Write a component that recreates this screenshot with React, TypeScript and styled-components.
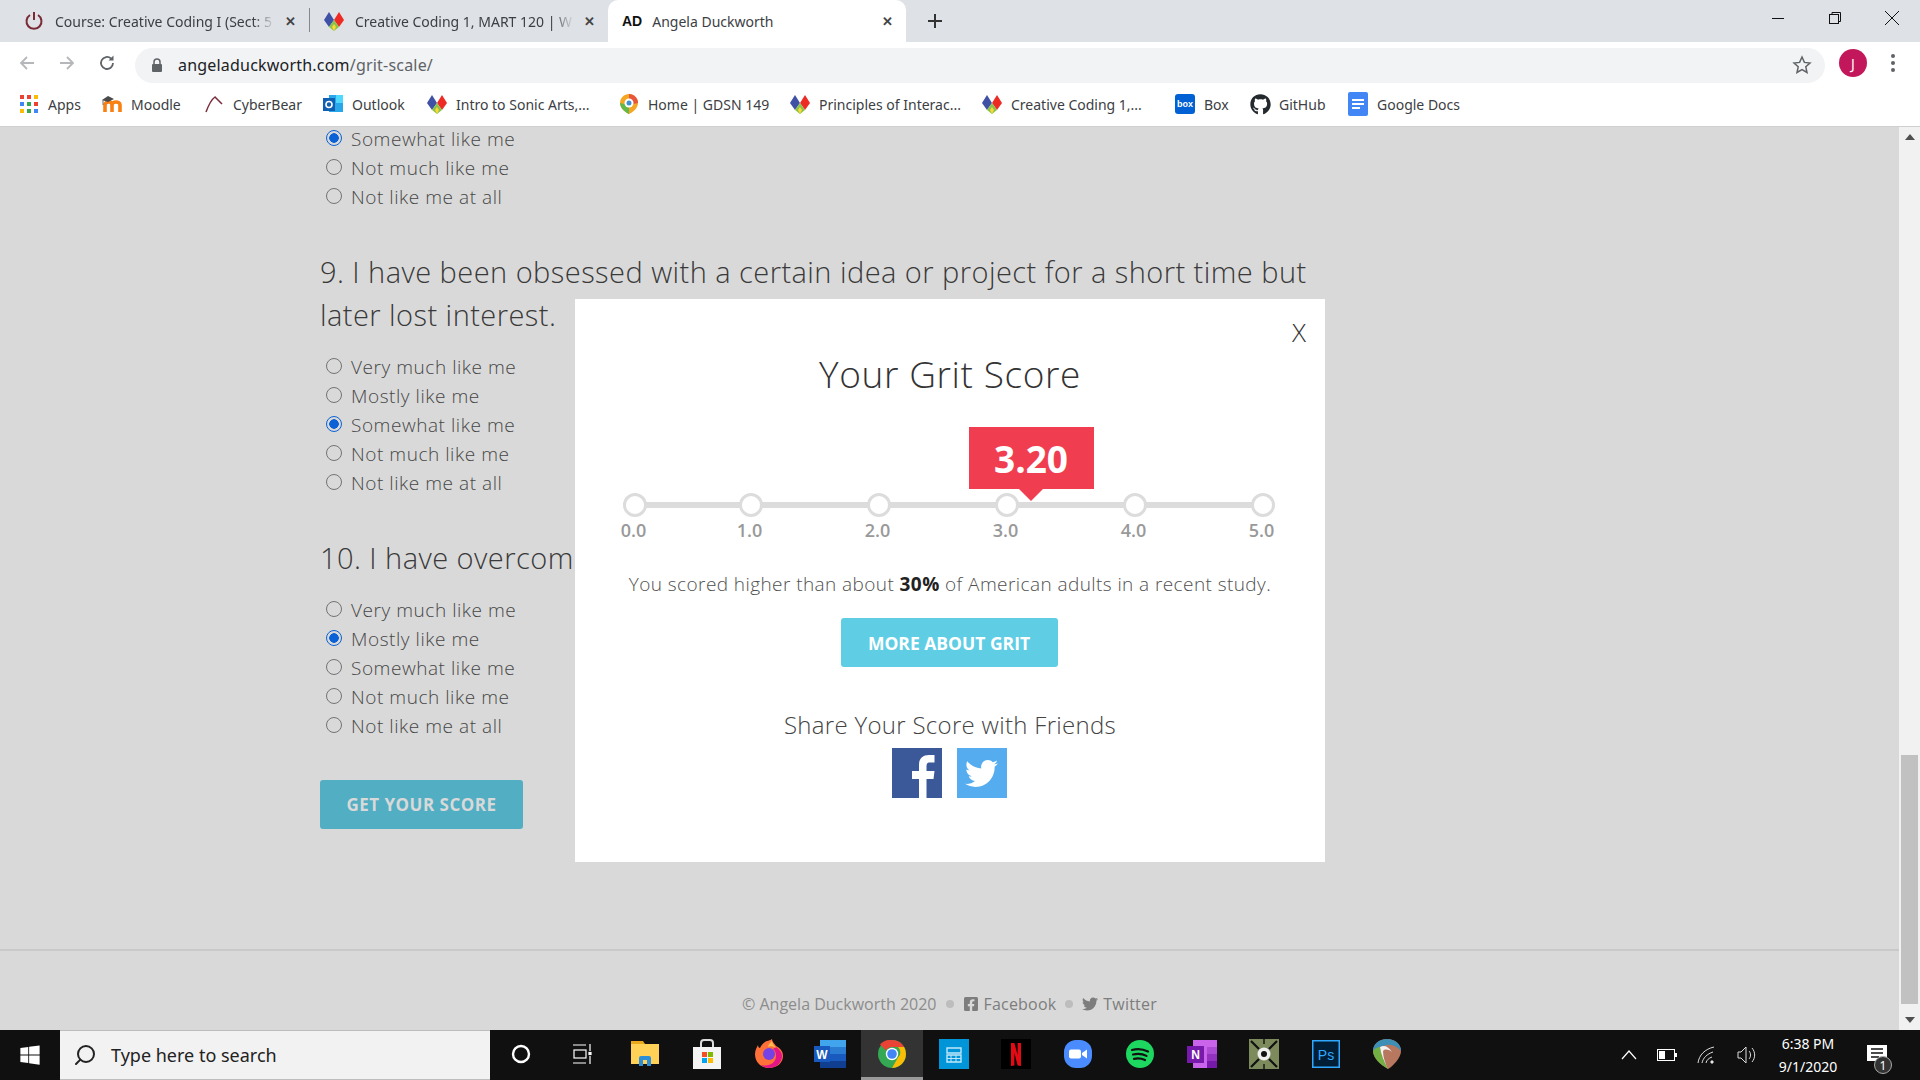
import React from 'react'
import styled, { createGlobalStyle } from 'styled-components'
import { FaFacebookSquare, FaTwitter, FaWindows, FaGithub } from 'react-icons/fa'
import { FiSearch } from 'react-icons/fi'

const PAGE_FONT = `'Open Sans', 'Noto Sans', sans-serif`
const UI_FONT = `'Noto Sans', 'Open Sans', sans-serif`

const OPTIONS = [
  'Very much like me',
  'Mostly like me',
  'Somewhat like me',
  'Not much like me',
  'Not like me at all',
]

const GlobalStyle = createGlobalStyle`
  html, body {
    margin: 0;
    padding: 0;
    height: 100%;
    overflow: hidden;
  }
  * {
    box-sizing: border-box;
  }
`

const TriColor = () => (
  <svg width="22" height="22" viewBox="0 0 22 22">
    <polygon points="6,2 11,10 6,17 1,10" fill="#3f51a5" />
    <polygon points="16,2 21,10 16,17 11,10" fill="#ee2a24" />
    <polygon points="11,10 16,17 11,21 6,17" fill="#8bc34a" />
    <polygon points="11,14 13,17 11,21 9,17" fill="#fdd835" />
  </svg>
)

const Bookmark = ({ icon, label, width }: { icon: React.ReactNode; label: string; width: number }) => (
  <BookmarkItem $width={width}>
    <BookmarkIcon>{icon}</BookmarkIcon>
    <span>{label}</span>
  </BookmarkItem>
)

const AppsIcon = () => (
  <svg width="18" height="18" viewBox="0 0 18 18">
    {[0, 7, 14].map((y, r) =>
      [0, 7, 14].map((x, c) => (
        <rect
          key={`${r}${c}`}
          x={x}
          y={y}
          width="4"
          height="4"
          fill={[['#ea4335', '#ea4335', '#fbbc05'], ['#4285f4', '#34a853', '#ea4335'], ['#fbbc05', '#34a853', '#4285f4']][r][c]}
        />
      )),
    )}
  </svg>
)

const MoodleIcon = () => (
  <svg width="20" height="18" viewBox="0 0 20 18">
    <path d="M3 17V10c0-2 2-3 4-3s3 1 3 3v7M10 10c0-2 2-3 4-3s4 1 4 3v7" fill="none" stroke="#f98012" strokeWidth="3.600" />
    <path d="M0 5l6-4 6 3-6 3z" fill="#4a4a4a" />
    <path d="M1 5v5" stroke="#4a4a4a" strokeWidth="0.800" />
  </svg>
)

const CyberBearIcon = () => (
  <svg width="20" height="18" viewBox="0 0 20 18">
    <path d="M2 17C5 9 8 4 11 2c2 2 5 5 7 7" fill="none" stroke="#7b2d3d" strokeWidth="1.500" />
  </svg>
)

const OutlookIcon = () => (
  <svg width="20" height="22" viewBox="0 0 20 22">
    <rect x="6" y="2" width="14" height="17" fill="#28a8ea" />
    <rect x="13" y="2" width="7" height="8" fill="#50d9ff" />
    <rect x="0" y="5" width="12" height="13" fill="#0f5fb3" />
    <circle cx="6" cy="11.500" r="3" fill="none" stroke="#fff" strokeWidth="1.600" />
  </svg>
)

const GdsnIcon = () => (
  <svg width="20" height="22" viewBox="0 0 20 22">
    <path d="M10 1c5 0 9 4 9 9 0 5-5 9-9 11-4-2-9-6-9-11 0-5 4-9 9-9z" fill="#f5a623" />
    <path d="M10 1c5 0 9 4 9 9l-9 2z" fill="#e8563a" />
    <path d="M1 10c0 5 5 9 9 11V12z" fill="#64b84a" />
    <circle cx="10" cy="10" r="4.500" fill="#fff" />
    <circle cx="10" cy="10" r="2.500" fill="#3f8fd2" />
  </svg>
)

const BoxIcon = () => <BoxBadge>box</BoxBadge>

const DocsIcon = () => (
  <svg width="20" height="24" viewBox="0 0 20 24">
    <rect width="20" height="24" rx="2" fill="#4285f4" />
    <rect x="4" y="7" width="12" height="2" fill="#fff" />
    <rect x="4" y="11" width="12" height="2" fill="#fff" />
    <rect x="4" y="15" width="8" height="2" fill="#fff" />
  </svg>
)

const ChromeIcon = () => (
  <svg width="28" height="28" viewBox="0 0 28 28">
    <circle cx="14" cy="14" r="14" fill="#34a853" />
    <path d="M14 0a14 14 0 0 1 12.100 7H14a7 7 0 0 0-6.100 3.500L2 4.500A14 14 0 0 1 14 0z" fill="#ea4335" />
    <path d="M26.100 7A14 14 0 0 1 14 28l6-10.500A7 7 0 0 0 20 7z" fill="#fbbc05" />
    <circle cx="14" cy="14" r="6.200" fill="#fff" />
    <circle cx="14" cy="14" r="4.800" fill="#4285f4" />
  </svg>
)

const FacebookF = () => (
  <svg width="50" height="50" viewBox="0 0 50 50">
    <path d="M27 50V31h-7v-8h7v-6c0-7 4-10 10-10h5.500v7.500H38c-2.500 0-3.500 1-3.500 3.500v5h8l-1 8h-7v19z" fill="#fff" />
  </svg>
)

const Tray = {
  Cortana: () => (
    <svg width="20" height="20" viewBox="0 0 20 20">
      <circle cx="10" cy="10" r="8" fill="none" stroke="#fff" strokeWidth="2.400" />
    </svg>
  ),
  TaskView: () => (
    <svg width="20" height="20" viewBox="0 0 20 20" fill="none" stroke="#fff" strokeWidth="1.200">
      <path d="M0 1h13M0 19h13M17 0v7M17 12v8" />
      <rect x="1" y="6" width="12" height="8" />
      <rect x="16" y="8.500" width="2" height="2" fill="#fff" />
    </svg>
  ),
  Explorer: () => (
    <svg width="30" height="26" viewBox="0 0 30 26">
      <path d="M1 0h12l2 3h14v20H1z" fill="#e9a91f" />
      <rect x="1" y="3" width="28" height="20" fill="#ffd257" />
      <path d="M9 25v-8a2 2 0 0 1 2-2h8a2 2 0 0 1 2 2v8h-4v-6h-4v6z" fill="#2a8fd8" />
    </svg>
  ),
  Store: () => (
    <svg width="30" height="30" viewBox="0 0 30 30">
      <path d="M9 8V4a3 3 0 0 1 3-3h6a3 3 0 0 1 3 3v4" fill="none" stroke="#ddd" strokeWidth="2" />
      <rect x="1" y="8" width="28" height="22" fill="#f4f4f4" />
      <rect x="10" y="13" width="5" height="5" fill="#f25022" />
      <rect x="16" y="13" width="5" height="5" fill="#7fba00" />
      <rect x="10" y="19" width="5" height="5" fill="#00a4ef" />
      <rect x="16" y="19" width="5" height="5" fill="#ffb900" />
    </svg>
  ),
  Firefox: () => (
    <svg width="30" height="30" viewBox="0 0 30 30">
      <path d="M15 29C7 29 1 23 1 15c0-4 2-7 3-9 0 2 1 3 2 3 1-3 4-6 7-7 4-1 5-2 5-2 0 3 3 5 4 7 4 2 7 5 7 10 0 7-6 12-14 12z" fill="#ff7139" />
      <path d="M22 8c4 3 6 6 6 9 0 7-6 12-13 12-3 0-6-1-8-3 8 2 15-2 15-9 0-3-1-6-3-7z" fill="#e31587" />
      <circle cx="15" cy="15" r="6" fill="#7542e5" />
      <path d="M18 2c0 3 3 5 4 7-3-2-6-2-8-1 0-2 2-4 4-6z" fill="#ffbd4f" />
    </svg>
  ),
  Word: () => (
    <svg width="32" height="28" viewBox="0 0 32 28">
      <rect x="6" y="0" width="26" height="28" fill="#2b7cd3" />
      <rect x="6" y="0" width="26" height="7" fill="#41a5ee" />
      <rect x="6" y="14" width="26" height="7" fill="#185abd" />
      <rect x="6" y="21" width="26" height="7" fill="#103f91" />
      <rect x="0" y="6" width="16" height="16" fill="#185abd" />
      <text x="8" y="18.500" textAnchor="middle" fill="#fff" fontSize="12" fontFamily="'Liberation Sans', sans-serif" fontWeight="700">W</text>
    </svg>
  ),
  Mail: () => (
    <svg width="30" height="30" viewBox="0 0 30 30">
      <rect width="30" height="30" fill="#0095d9" />
      <path d="M8 9h14v5H8zM8 16h14v7H8z" fill="none" stroke="#bfe7f7" strokeWidth="1.400" />
      <path d="M12 16v7M17 16v7M8 19.500h14" stroke="#bfe7f7" strokeWidth="1" />
    </svg>
  ),
  Netflix: () => (
    <svg width="30" height="30" viewBox="0 0 30 30">
      <rect width="30" height="30" fill="#000" />
      <path d="M10 4h3.400l3.200 12V4H20v23l-3.400-.6L13.400 14v12.600L10 27z" fill="#e50914" />
    </svg>
  ),
  Zoom: () => (
    <svg width="28" height="28" viewBox="0 0 28 28">
      <rect width="28" height="28" rx="12" fill="#4a8cff" />
      <rect x="5" y="9.500" width="12" height="9" rx="2" fill="#fff" />
      <path d="M18 13l5-3.500v9L18 15z" fill="#fff" />
    </svg>
  ),
  Spotify: () => (
    <svg width="28" height="28" viewBox="0 0 28 28">
      <circle cx="14" cy="14" r="14" fill="#1ed760" />
      <path d="M6 10c5-1.500 11-1 16 1.500M7 14.500c4.500-1 9.500-.7 13.500 1.400M8 18.800c4-.8 7.500-.5 11 1.200" fill="none" stroke="#111" strokeWidth="2.200" strokeLinecap="round" />
    </svg>
  ),
  OneNote: () => (
    <svg width="30" height="28" viewBox="0 0 30 28">
      <rect x="6" y="0" width="24" height="28" fill="#ca64ea" />
      <rect x="20" y="7" width="10" height="7" fill="#ae4bd5" />
      <rect x="20" y="14" width="10" height="7" fill="#9332bf" />
      <rect x="20" y="21" width="10" height="7" fill="#7719aa" />
      <rect x="0" y="6" width="17" height="17" fill="#7719aa" />
      <text x="8.500" y="19" textAnchor="middle" fill="#fff" fontSize="12" fontFamily="'Liberation Sans', sans-serif" fontWeight="700">N</text>
    </svg>
  ),
  Obs: () => (
    <svg width="30" height="30" viewBox="0 0 30 30">
      <rect width="30" height="30" fill="#7d8a5c" />
      <path d="M2 2l8 8M28 2l-8 8M2 28l8-8M28 28l-8-8" stroke="#111" strokeWidth="2.200" />
      <path d="M15 0v5M15 25v5" stroke="#111" strokeWidth="1.400" />
      <circle cx="15" cy="15" r="6.500" fill="#eee" />
      <circle cx="15" cy="15" r="3" fill="#111" />
    </svg>
  ),
  Photoshop: () => (
    <svg width="28" height="28" viewBox="0 0 28 28">
      <rect x="0.750" y="0.750" width="26.500" height="26.500" fill="#001e36" stroke="#31a8ff" strokeWidth="1.500" />
      <text x="14" y="19.500" textAnchor="middle" fill="#31a8ff" fontSize="14" fontFamily="'Liberation Sans', sans-serif">Ps</text>
    </svg>
  ),
  Reaper: () => (
    <svg width="28" height="30" viewBox="0 0 28 30">
      <path d="M14 0c8 0 14 5 14 12 0 7-8 15-13 18C8 26 0 19 0 12 0 5 6 0 14 0z" fill="#b8775f" />
      <path d="M14 0c8 0 14 5 14 12-4-5-10-7-14-6-5 1-10 3-14 6C0 5 6 0 14 0z" fill="#3e8fb5" />
      <path d="M0 12c2-3 5-4 7-4 1 7 4 15 8 22C8 26 0 19 0 12z" fill="#72b043" />
      <path d="M7 8c4-2 8-1 12 5-4-3-7-3-9-1 0 6 2 12 5 18-4-7-7-15-8-22z" fill="#f2f2f2" />
    </svg>
  ),
}

const TASK_ICONS = [
  { key: 'cortana', node: <Tray.Cortana /> },
  { key: 'task', node: <Tray.TaskView /> },
  { key: 'explorer', node: <Tray.Explorer /> },
  { key: 'store', node: <Tray.Store /> },
  { key: 'firefox', node: <Tray.Firefox /> },
  { key: 'word', node: <Tray.Word /> },
  { key: 'chrome', node: <ChromeIcon />, active: true },
  { key: 'mail', node: <Tray.Mail /> },
  { key: 'netflix', node: <Tray.Netflix /> },
  { key: 'zoom', node: <Tray.Zoom /> },
  { key: 'spotify', node: <Tray.Spotify /> },
  { key: 'onenote', node: <Tray.OneNote /> },
  { key: 'obs', node: <Tray.Obs /> },
  { key: 'ps', node: <Tray.Photoshop /> },
  { key: 'reaper', node: <Tray.Reaper /> },
]

const SCALE = [
  { label: '0.0', width: 116 },
  { label: '1.0', width: 128 },
  { label: '2.0', width: 128 },
  { label: '3.0', width: 128 },
  { label: '4.0', width: 128 },
  { label: '5.0', width: 0 },
]

const Question = ({ checked }: { checked: number }) => (
  <Options>
    {OPTIONS.map((text, i) => (
      <Option key={text}>
        <Radio type="radio" defaultChecked={i === checked} name={`q${checked}${text}`} />
        {text}
      </Option>
    ))}
  </Options>
)

export default function App() {
  return (
    <Screen>
      <GlobalStyle />
      <TabStrip>
        <Tab $width={299}>
          <TabIcon>
            <svg width="20" height="20" viewBox="0 0 20 20" fill="none" stroke="#7a2a35" strokeWidth="2">
              <path d="M10 1v8" />
              <path d="M6 4a7.500 7.500 0 1 0 8 0" />
            </svg>
          </TabIcon>
          <FadedLabel>Course: Creative Coding I (Sect: 5</FadedLabel>
          <TabClose>✕</TabClose>
        </Tab>
        <TabSeparator />
        <Tab $width={298}>
          <TabIcon><TriColor /></TabIcon>
          <FadedLabel>Creative Coding 1, MART 120 | W</FadedLabel>
          <TabClose>✕</TabClose>
        </Tab>
        <ActiveTab>
          <AdMark>AD</AdMark>
          <TabLabel>Angela Duckworth</TabLabel>
          <TabClose>✕</TabClose>
        </ActiveTab>
        <NewTab>
          <svg width="16" height="16" viewBox="0 0 16 16" stroke="#333" strokeWidth="2">
            <path d="M8 1v14M1 8h14" />
          </svg>
        </NewTab>
        <WindowControls>
          <WindowButton>
            <svg width="12" height="12" viewBox="0 0 12 12" stroke="#111"><path d="M0 6.500h12" /></svg>
          </WindowButton>
          <WindowButton>
            <svg width="14" height="14" viewBox="0 0 14 14" fill="none" stroke="#111">
              <rect x="1.500" y="3.500" width="9" height="9" />
              <path d="M4 3.500V1.500h8.500v9h-2" />
            </svg>
          </WindowButton>
          <WindowButton>
            <svg width="14" height="14" viewBox="0 0 14 14" stroke="#111"><path d="M0 0l14 14M14 0L0 14" /></svg>
          </WindowButton>
        </WindowControls>
      </TabStrip>

      <Toolbar>
        <NavIcons>
          <svg width="18" height="18" viewBox="0 0 18 18" fill="none" stroke="#b5b7ba" strokeWidth="1.800">
            <path d="M16 9H3M9 3L3 9l6 6" />
          </svg>
          <svg width="18" height="18" viewBox="0 0 18 18" fill="none" stroke="#b5b7ba" strokeWidth="1.800">
            <path d="M2 9h13M9 3l6 6-6 6" />
          </svg>
          <svg width="18" height="18" viewBox="0 0 18 18" fill="none" stroke="#5f6368" strokeWidth="1.800">
            <path d="M15 9a6 6 0 1 1-2-4.500" />
            <path d="M15.500 1.500v5h-5z" fill="#5f6368" stroke="none" />
          </svg>
        </NavIcons>
        <Omnibox>
          <svg width="12" height="15" viewBox="0 0 12 15">
            <path d="M3 6V4a3 3 0 0 1 6 0v2" fill="none" stroke="#5f6368" strokeWidth="1.500" />
            <rect x="1" y="6" width="10" height="8" rx="1" fill="#5f6368" />
          </svg>
          <UrlText>
            angeladuckworth.com<UrlPath>/grit-scale/</UrlPath>
          </UrlText>
          <svg width="20" height="20" viewBox="0 0 20 20" fill="none" stroke="#5f6368" strokeWidth="1.500">
            <path d="M10 2l2.400 5.400 5.600.6-4.200 3.800 1.200 5.700L10 14.600l-5 2.900 1.200-5.700L2 8l5.600-.6z" />
          </svg>
        </Omnibox>
        <Avatar>J</Avatar>
        <MenuDots>
          <i />
          <i />
          <i />
        </MenuDots>
      </Toolbar>

      <BookmarksBar>
        <Bookmark width={83} icon={<AppsIcon />} label="Apps" />
        <Bookmark width={102} icon={<MoodleIcon />} label="Moodle" />
        <Bookmark width={119} icon={<CyberBearIcon />} label="CyberBear" />
        <Bookmark width={104} icon={<OutlookIcon />} label="Outlook" />
        <Bookmark width={192} icon={<TriColor />} label="Intro to Sonic Arts,..." />
        <Bookmark width={171} icon={<GdsnIcon />} label="Home | GDSN 149" />
        <Bookmark width={192} icon={<TriColor />} label="Principles of Interac..." />
        <Bookmark width={193} icon={<TriColor />} label="Creative Coding 1,..." />
        <Bookmark width={75} icon={<BoxIcon />} label="Box" />
        <Bookmark width={98} icon={<FaGithub size={21} color="#24292e" />} label="GitHub" />
        <Bookmark width={130} icon={<DocsIcon />} label="Google Docs" />
      </BookmarksBar>

      <PageArea>
        <Page>
          <Article>
            <Options>
              {OPTIONS.slice(2).map((text, i) => (
                <Option key={text}>
                  <Radio type="radio" defaultChecked={i === 0} name="q8" />
                  {text}
                </Option>
              ))}
            </Options>
            <QuestionTitle>
              9. I have been obsessed with a certain idea or project for a short time but later lost interest.
            </QuestionTitle>
            <Question checked={2} />
            <QuestionTitle>10. I have overcome setbacks to conquer an important challenge.</QuestionTitle>
            <Question checked={1} />
            <ScoreButton>GET YOUR SCORE</ScoreButton>
          </Article>
          <Footer>
            <FooterInner>
              <Copyright>© Angela Duckworth 2020</Copyright>
              <FooterDot />
              <FooterLink>
                <FaFacebookSquare size={16} /> Facebook
              </FooterLink>
              <FooterDot />
              <FooterLink>
                <FaTwitter size={16} /> Twitter
              </FooterLink>
            </FooterInner>
          </Footer>
        </Page>

        <Scrollbar>
          <ScrollArrow>
            <svg width="10" height="6" viewBox="0 0 10 6"><path d="M5 0l5 6H0z" fill="#505050" /></svg>
          </ScrollArrow>
          <ScrollTrack>
            <ScrollThumb />
          </ScrollTrack>
          <ScrollArrow>
            <svg width="10" height="6" viewBox="0 0 10 6"><path d="M5 6L0 0h10z" fill="#505050" /></svg>
          </ScrollArrow>
        </Scrollbar>

        <Modal>
          <CloseX>X</CloseX>
          <ModalTitle>Your Grit Score</ModalTitle>
          <ScaleWrap>
            <ScoreBadge>3.20</ScoreBadge>
            <ScaleTrack>
              {SCALE.map((s) => (
                <ScaleStop key={s.label} $width={s.width}>
                  <ScaleDot />
                  <ScaleLabel>{s.label}</ScaleLabel>
                </ScaleStop>
              ))}
            </ScaleTrack>
          </ScaleWrap>
          <ScoreText>
            You scored higher than about <strong>30%</strong> of American adults in a recent study.
          </ScoreText>
          <MoreButton>MORE ABOUT GRIT</MoreButton>
          <ShareTitle>Share Your Score with Friends</ShareTitle>
          <ShareRow>
            <ShareTile $bg="#3b5998">
              <FacebookF />
            </ShareTile>
            <ShareTile $bg="#55acee">
              <FaTwitter size={33} />
            </ShareTile>
          </ShareRow>
        </Modal>
      </PageArea>

      <Taskbar>
        <StartButton>
          <FaWindows size={22} color="#fff" />
        </StartButton>
        <SearchBox>
          <SearchGlass>
            <FiSearch size={24} color="#222" />
          </SearchGlass>
          Type here to search
        </SearchBox>
        <TaskIcons>
          {TASK_ICONS.map((icon) => (
            <TaskCell key={icon.key} $active={icon.active}>
              {icon.node}
            </TaskCell>
          ))}
        </TaskIcons>
        <SystemTray>
          <svg width="16" height="10" viewBox="0 0 16 10" fill="none" stroke="#fff" strokeWidth="1.200">
            <path d="M1 9l7-8 7 8" />
          </svg>
          <svg width="20" height="12" viewBox="0 0 20 12">
            <rect x="0.500" y="0.500" width="17" height="11" fill="none" stroke="#fff" />
            <rect x="2" y="2" width="6" height="8" fill="#fff" />
            <rect x="18" y="4" width="2" height="4" fill="#fff" />
          </svg>
          <svg width="20" height="18" viewBox="0 0 20 18" fill="none" stroke="#ddd" strokeWidth="1">
            <path d="M1 17C2 9 8 3 17 1M5 17c1-5 5-9 11-11M9 17c.5-3 3-5 6-6" />
            <circle cx="15" cy="16" r="1.200" fill="#fff" />
          </svg>
          <svg width="20" height="20" viewBox="0 0 20 20" fill="none" stroke="#ddd" strokeWidth="1">
            <path d="M1 7h3l5-5v16l-5-5H1z" />
            <path d="M12 6c2 2 2 6 0 8M15 3c3.500 4 3.500 10 0 14" />
          </svg>
          <Clock>
            <span>6:38 PM</span>
            <span>9/1/2020</span>
          </Clock>
          <Notify>
            <svg width="20" height="20" viewBox="0 0 20 20">
              <rect width="20" height="16" fill="#fff" />
              <path d="M4 4h12M4 8h12M4 12h8" stroke="#111" strokeWidth="1.400" />
            </svg>
            <NotifyCount>1</NotifyCount>
          </Notify>
        </SystemTray>
      </Taskbar>
    </Screen>
  )
}

const Screen = styled.div`
  width: 1920px;
  height: 1080px;
  display: flex;
  flex-direction: column;
  overflow: hidden;
  font-family: ${UI_FONT};
  background: #d9d9d9;
`

const TabStrip = styled.div`
  height: 42px;
  flex: none;
  display: flex;
  align-items: stretch;
  padding-left: 10px;
  background: #dee1e6;
  font-size: 14px;
  color: #3c4043;
`

const Tab = styled.div<{ $width: number }>`
  width: ${(p) => p.$width}px;
  display: flex;
  align-items: center;
  padding: 0 13px 0 13px;
  gap: 10px;
`

const TabSeparator = styled.div`
  width: 1px;
  height: 24px;
  margin-top: 8px;
  background: #85888c;
`

const ActiveTab = styled.div`
  width: 298px;
  display: flex;
  align-items: center;
  gap: 10px;
  padding: 0 13px 0 14px;
  background: #fff;
  border-radius: 10px 10px 0 0;
`

const TabIcon = styled.span`
  width: 22px;
  height: 22px;
  flex: none;
  display: flex;
  align-items: center;
  justify-content: center;
`

const AdMark = styled.span`
  font: 700 14px 'Liberation Sans', sans-serif;
  color: #111;
`

const TabLabel = styled.span`
  flex: 1;
  min-width: 0;
  white-space: nowrap;
`

const FadedLabel = styled(TabLabel)`
  mask-image: linear-gradient(to right, #000 90%, transparent);
`

const TabClose = styled.span`
  font-size: 13px;
  font-weight: 700;
  color: #444;
`

const NewTab = styled.div`
  width: 44px;
  margin-left: 7px;
  display: flex;
  align-items: center;
  justify-content: center;
`

const WindowControls = styled.div`
  margin-left: auto;
  display: flex;
  height: 36px;
`

const WindowButton = styled.div`
  width: 57px;
  display: flex;
  align-items: center;
  justify-content: center;
`

const Toolbar = styled.div`
  height: 42px;
  flex: none;
  display: flex;
  align-items: center;
  background: #fff;
  padding: 0 25px 0 18px;
`

const NavIcons = styled.div`
  width: 117px;
  display: flex;
  gap: 22px;
  align-items: center;
`

const Omnibox = styled.div`
  width: 1690px;
  height: 35px;
  margin-top: 4px;
  display: flex;
  align-items: center;
  padding: 0 13px 0 16px;
  gap: 15px;
  border-radius: 18px;
  background: #f1f3f4;
`

const UrlText = styled.div`
  flex: 1;
  font-size: 16px;
  color: #202124;
  letter-spacing: 0.2px;
`

const UrlPath = styled.span`
  color: #5f6368;
`

const Avatar = styled.div`
  width: 28px;
  height: 28px;
  margin-left: 14px;
  border-radius: 50%;
  background: #c2185b;
  color: #fff;
  font-size: 14px;
  display: flex;
  align-items: center;
  justify-content: center;
`

const MenuDots = styled.div`
  margin-left: auto;
  display: flex;
  flex-direction: column;
  gap: 3px;
  i {
    width: 4px;
    height: 4px;
    border-radius: 50%;
    background: #5f6368;
  }
`

const BookmarksBar = styled.div`
  height: 43px;
  flex: none;
  display: flex;
  align-items: center;
  padding: 0 0 2px 18px;
  background: #fff;
  border-bottom: 1px solid #d0d0d0;
  font-size: 14px;
  color: #3c4043;
`

const BookmarkItem = styled.div<{ $width: number }>`
  width: ${(p) => p.$width}px;
  flex: none;
  display: flex;
  align-items: center;
  gap: 8px;
  white-space: nowrap;
`

const BookmarkIcon = styled.span`
  width: 22px;
  height: 24px;
  flex: none;
  display: flex;
  align-items: center;
  justify-content: center;
`

const BoxBadge = styled.span`
  width: 20px;
  height: 20px;
  border-radius: 3px;
  background: #0061d5;
  color: #fff;
  font: 700 9px 'Liberation Sans', sans-serif;
  display: flex;
  align-items: center;
  justify-content: center;
`

const PageArea = styled.div`
  flex: 1;
  min-height: 0;
  position: relative;
  display: flex;
`

const Page = styled.div`
  flex: 1;
  min-width: 0;
  overflow: hidden;
  background: #d9d9d9;
  font-family: ${PAGE_FONT};
`

const Article = styled.div`
  width: 1000px;
  margin: -3px 0 0 320px;
`

const Options = styled.div`
  display: flex;
  flex-direction: column;
`

const Option = styled.label`
  height: 29px;
  display: flex;
  align-items: center;
  gap: 9px;
  font-size: 19px;
  font-weight: 300;
  letter-spacing: 0.55px;
  color: #474747;
`

const Radio = styled.input`
  appearance: none;
  width: 16px;
  height: 16px;
  margin: 0 0 2px 6px;
  flex: none;
  border-radius: 50%;
  border: 1.5px solid #737373;
  background: transparent;
  &:checked {
    border: 1.5px solid #0b62d6;
    background: radial-gradient(circle, #0b62d6 0 4.5px, #d9d9d9 5px);
  }
`

const QuestionTitle = styled.h3`
  margin: 39px 0 16px;
  font-size: 29px;
  line-height: 43px;
  font-weight: 300;
  letter-spacing: 0.45px;
  color: #3a3a3a;
`

const ScoreButton = styled.div`
  width: 203px;
  height: 49px;
  margin-top: 40px;
  border-radius: 3px;
  background: #52aec3;
  color: #d9d9d9;
  font-size: 17px;
  font-weight: 700;
  letter-spacing: 0.5px;
  display: flex;
  align-items: center;
  justify-content: center;
`

const Footer = styled.div`
  margin-top: 120px;
  height: 81px;
  border-top: 2px solid #c9c9c9;
  display: flex;
  justify-content: center;
  padding-top: 40px;
`

const FooterInner = styled.div`
  height: 26px;
  display: flex;
  align-items: center;
  gap: 9px;
  font-size: 16px;
  letter-spacing: 0.2px;
  color: #8c8c8c;
`

const Copyright = styled.span`
  letter-spacing: 0;
`

const FooterDot = styled.span`
  width: 8px;
  height: 8px;
  border-radius: 50%;
  background: #bdbdbd;
`

const FooterLink = styled.span`
  display: flex;
  align-items: center;
  gap: 5px;
  color: #7d7d7d;
`

const Scrollbar = styled.div`
  width: 21px;
  flex: none;
  display: flex;
  flex-direction: column;
  background: #f1f1f1;
`

const ScrollArrow = styled.div`
  height: 20px;
  flex: none;
  display: flex;
  align-items: center;
  justify-content: center;
`

const ScrollTrack = styled.div`
  flex: 1;
  display: flex;
  flex-direction: column;
  justify-content: flex-end;
  padding: 0 2px 6px;
`

const ScrollThumb = styled.div`
  height: 249px;
  background: #c1c1c1;
`

const Modal = styled.div`
  position: absolute;
  left: 575px;
  top: 172px;
  width: 750px;
  height: 563px;
  background: #fff;
  font-family: ${PAGE_FONT};
  display: flex;
  flex-direction: column;
  align-items: center;
`

const CloseX = styled.div`
  position: absolute;
  right: 19px;
  top: 15px;
  font-size: 26px;
  font-weight: 300;
  color: #333;
`

const ModalTitle = styled.h2`
  margin: 50px 0 0;
  font-size: 37px;
  line-height: 50px;
  font-weight: 300;
  letter-spacing: 0.6px;
  color: #333;
`

const ScaleWrap = styled.div`
  position: relative;
  width: 652px;
  margin: 28px 3px 0 0;
  padding-top: 66px;
`

const ScoreBadge = styled.div`
  position: absolute;
  left: 346px;
  top: 0;
  width: 125px;
  height: 62px;
  background: #f03e50;
  color: #fff;
  font-size: 37px;
  font-weight: 700;
  display: flex;
  align-items: center;
  justify-content: center;
  &::after {
    content: '';
    position: absolute;
    left: 50px;
    top: 62px;
    border-left: 12px solid transparent;
    border-right: 12px solid transparent;
    border-top: 12px solid #f03e50;
  }
`

const ScaleTrack = styled.div`
  display: flex;
  padding-left: 12px;
  background: linear-gradient(#dcdcdc, #dcdcdc) no-repeat 12px 9px / 628px 6px;
`

const ScaleStop = styled.div<{ $width: number }>`
  width: ${(p) => p.$width}px;
  position: relative;
  height: 58px;
`

const ScaleDot = styled.span`
  position: absolute;
  left: -12px;
  top: 0;
  width: 24px;
  height: 24px;
  border-radius: 50%;
  background: #fff;
  border: 3px solid #dcdcdc;
`

const ScaleLabel = styled.span`
  position: absolute;
  left: -31px;
  top: 25px;
  width: 60px;
  text-align: center;
  font-size: 18px;
  font-weight: 600;
  color: #999;
`

const ScoreText = styled.p`
  margin: 19px 0 0;
  font-size: 19px;
  line-height: 28px;
  font-weight: 300;
  letter-spacing: 0.42px;
  color: #505050;
  strong {
    font-weight: 700;
    color: #222;
  }
`

const MoreButton = styled.div`
  width: 217px;
  height: 49px;
  margin: 20px 2px 0 0;
  border-radius: 3px;
  background: #5fcde4;
  color: #fff;
  font-size: 17.5px;
  font-weight: 700;
  display: flex;
  align-items: center;
  justify-content: center;
`

const ShareTitle = styled.div`
  margin-top: 41px;
  font-size: 24px;
  line-height: 34px;
  font-weight: 300;
  letter-spacing: 0.3px;
  color: #444;
`

const ShareRow = styled.div`
  display: flex;
  gap: 15px;
  margin: 6px 2px 0 0;
`

const ShareTile = styled.div<{ $bg: string }>`
  width: 50px;
  height: 50px;
  background: ${(p) => p.$bg};
  color: #fff;
  display: flex;
  align-items: center;
  justify-content: center;
  overflow: hidden;
`

const Taskbar = styled.div`
  height: 50px;
  flex: none;
  display: flex;
  align-items: stretch;
  background: #101010;
`

const StartButton = styled.div`
  width: 60px;
  display: flex;
  align-items: center;
  justify-content: center;
`

const SearchBox = styled.div`
  width: 430px;
  display: flex;
  align-items: center;
  gap: 14px;
  padding-left: 13px;
  background: #f2f2f2;
  border: 1px solid #bdbdbd;
  border-left: 0;
  border-right: 0;
  font-size: 18px;
  color: #222;
`

const SearchGlass = styled.span`
  display: flex;
  transform: scaleX(-1);
`

const TaskIcons = styled.div`
  display: flex;
`

const TaskCell = styled.div<{ $active?: boolean }>`
  width: 61.9px;
  display: flex;
  align-items: center;
  justify-content: center;
  background: ${(p) => (p.$active ? '#333' : 'transparent')};
  border-bottom: ${(p) => (p.$active ? '3px solid #9a9a9a' : '3px solid transparent')};
`

const SystemTray = styled.div`
  margin-left: auto;
  display: flex;
  align-items: center;
  gap: 20px;
  padding-right: 33px;
`

const Clock = styled.div`
  width: 82px;
  margin-left: -10px;
  display: flex;
  flex-direction: column;
  align-items: center;
  gap: 4px;
  font-size: 14px;
  line-height: 19px;
  color: #fff;
`

const Notify = styled.div`
  position: relative;
  margin-left: -2px;
  display: flex;
`

const NotifyCount = styled.span`
  position: absolute;
  right: -5px;
  bottom: -9px;
  width: 18px;
  height: 18px;
  border-radius: 50%;
  border: 1px solid #aaa;
  background: #333;
  color: #fff;
  font-size: 12px;
  display: flex;
  align-items: center;
  justify-content: center;
`
